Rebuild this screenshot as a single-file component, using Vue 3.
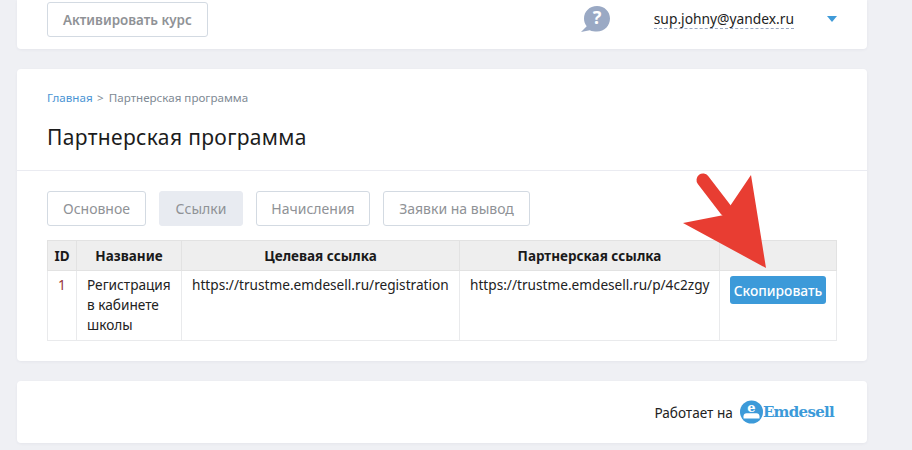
<template>
  <div class="page">
    <section class="card top">
      <button class="btn bold">Активировать курс</button>
      <div class="user">
        <svg class="help" width="31" height="28" viewBox="0 0 31 28">
          <path d="M17 1C9.500 1 4 6.500 4 13.500c0 3 1 5.600 2.700 7.700L1 27l8.800-1.800c2.100 1 4.600 1.300 7.200 1.300C24.500 26.500 30 20.500 30 13.500S24.500 1 17 1Z" fill="#9aa9c4"/>
          <text x="17" y="19" text-anchor="middle" class="qm">?</text>
        </svg>
        <span class="email">sup.johny@yandex.ru</span>
        <span class="caret"></span>
      </div>
    </section>

    <section class="card main">
      <div class="head">
        <nav class="crumbs"><a>Главная</a><i>&gt;</i><span>Партнерская программа</span></nav>
        <h1>Партнерская программа</h1>
      </div>
      <div class="body">
        <div class="tabs">
          <button class="btn tab-main">Основное</button>
          <button class="btn tab-links active">Ссылки</button>
          <button class="btn tab-acc">Начисления</button>
          <button class="btn tab-req">Заявки на вывод</button>
        </div>
        <table>
          <colgroup>
            <col style="width:29px" /><col style="width:105px" /><col style="width:278px" /><col style="width:260px" /><col style="width:117px" />
          </colgroup>
          <thead>
            <tr><th>ID</th><th>Название</th><th>Целевая ссылка</th><th>Партнерская ссылка</th><th></th></tr>
          </thead>
          <tbody>
            <tr>
              <td class="id">1</td>
              <td>Регистрация в кабинете школы</td>
              <td>https://trustme.emdesell.ru/registration</td>
              <td>https://trustme.emdesell.ru/p/4c2zgy</td>
              <td class="act"><button class="copy">Скопировать</button></td>
            </tr>
          </tbody>
        </table>
      </div>
    </section>

    <section class="card foot">
      <span class="powered">Работает на</span>
      <svg width="23" height="24" viewBox="0 0 23 24" class="logo">
        <circle cx="11.500" cy="12" r="11.500" fill="#3c9ad9"/>
        <path d="M3.500 18.500v-2.200c0-1.700 1.300-3 3-3h10c1.700 0 3 1.300 3 3v2.200Z" fill="#fff"/>
        <text x="11.500" y="12" text-anchor="middle" class="loge">e</text>
      </svg>
      <span class="brand">Emdesell</span>
    </section>

    <svg class="arrow" width="100" height="110" viewBox="0 0 100 110">
      <path d="M21 16 44 46" stroke="#e83d32" stroke-width="13" stroke-linecap="round" fill="none"/>
      <path d="M69 11 84 104 1 59 42 51Z" fill="#e83d32"/>
    </svg>
  </div>
</template>

<script setup>
</script>

<style>
html, body { margin: 0; background: #eff0f4; overflow: hidden; }
</style>

<style scoped>
.page {
  position: relative;
  width: 912px;
  height: 450px;
  overflow: hidden;
  padding: 0 45px 0 17px;
  box-sizing: border-box;
  font-family: "Noto Sans", sans-serif;
  color: #222;
  display: flex;
  flex-direction: column;
  gap: 20px;
}
.card {
  background: #fff;
  border-radius: 4px;
  box-shadow: 0 1px 3px rgba(60, 70, 100, 0.06);
}
.top {
  height: 49px;
  border-radius: 0 0 4px 4px;
  padding: 2px 30px 0;
  box-sizing: border-box;
  display: flex;
  justify-content: space-between;
  align-items: flex-start;
}
.btn {
  height: 35px;
  padding: 0 15px;
  background: #fff;
  border: 1px solid #d3dae2;
  border-radius: 3px;
  font: 14px "Noto Sans", sans-serif;
  color: #8f9296;
  box-sizing: border-box;
}
.bold { font-weight: 600; font-size: 13.400px; }
.tab-main, .tab-links, .tab-acc, .tab-req { padding: 0; }
.tab-main { width: 99px; }
.tab-links { width: 84px; }
.tab-acc { width: 114px; }
.tab-req { width: 147px; }
.active { background: #e8ebf1; border-color: #e8ebf1; }
.user {
  display: flex;
  align-items: center;
  margin-top: 3px;
}
.help { margin-right: 43px; }
.qm { font: 700 18px "Noto Sans", sans-serif; fill: #fff; }
.email {
  font-size: 13.800px;
  line-height: 19px;
  border-bottom: 1px dashed #9aa9c4;
  color: #222;
}
.caret {
  width: 0;
  height: 0;
  margin-left: 33px;
  border: 5px solid transparent;
  border-top: 6px solid #3f9ad8;
  border-bottom: 0;
}
.main { height: 292px; display: flex; flex-direction: column; }
.head {
  height: 102px;
  padding: 21px 30px 0;
  box-sizing: border-box;
  border-bottom: 1px solid #eaebf1;
}
.crumbs { font-size: 11.600px; line-height: 15px; color: #808a94; display: flex; }
.crumbs a { color: #4a94d4; }
.crumbs i { font-style: normal; margin: 0 5px 0 4.500px; }
h1 {
  margin: 17px 0 0;
  font-size: 21px;
  font-weight: 400;
  line-height: 30px;
  color: #1c1c1c;
  letter-spacing: 0.350px;
}
.body { padding: 20px 30px 0; }
.tabs { display: flex; gap: 13px; margin-bottom: 14px; }
table {
  width: 789px;
  table-layout: fixed;
  border-collapse: collapse;
  font-size: 13.650px;
  line-height: 20px;
}
th, td { border: 1px solid #e9eaec; padding: 0 10px; }
th {
  height: 29px;
  background: #eeeeee;
  border-color: #e2e2e2;
  font-size: 13.500px;
  font-weight: 700;
  text-align: center;
  color: #1a1a1a;
  padding: 0;
}
td { vertical-align: top; padding: 4px 10px 5px; white-space: normal; }
td.id { text-align: center; color: #98323a; padding: 4px 0 5px; }
td.act { padding: 5px 10px 0; }
.copy {
  display: block;
  width: 96px;
  height: 28px;
  background: #3c9ad9;
  color: #fff;
  border: 0;
  border-radius: 3px;
  font: 500 13.800px "Noto Sans", sans-serif;
  padding: 0;
}
.foot {
  height: 62px;
  display: flex;
  align-items: center;
  justify-content: flex-end;
  padding-right: 33px;
}
.powered { font-size: 13.600px; margin-right: 7px; }
.loge { font: 700 13px "DejaVu Serif", serif; fill: #fff; }
.brand {
  font: 700 15px "DejaVu Serif", serif;
  color: #3c9ad9;
  letter-spacing: -0.700px;
}
.arrow { position: absolute; left: 682px; top: 164px; pointer-events: none; }
</style>
